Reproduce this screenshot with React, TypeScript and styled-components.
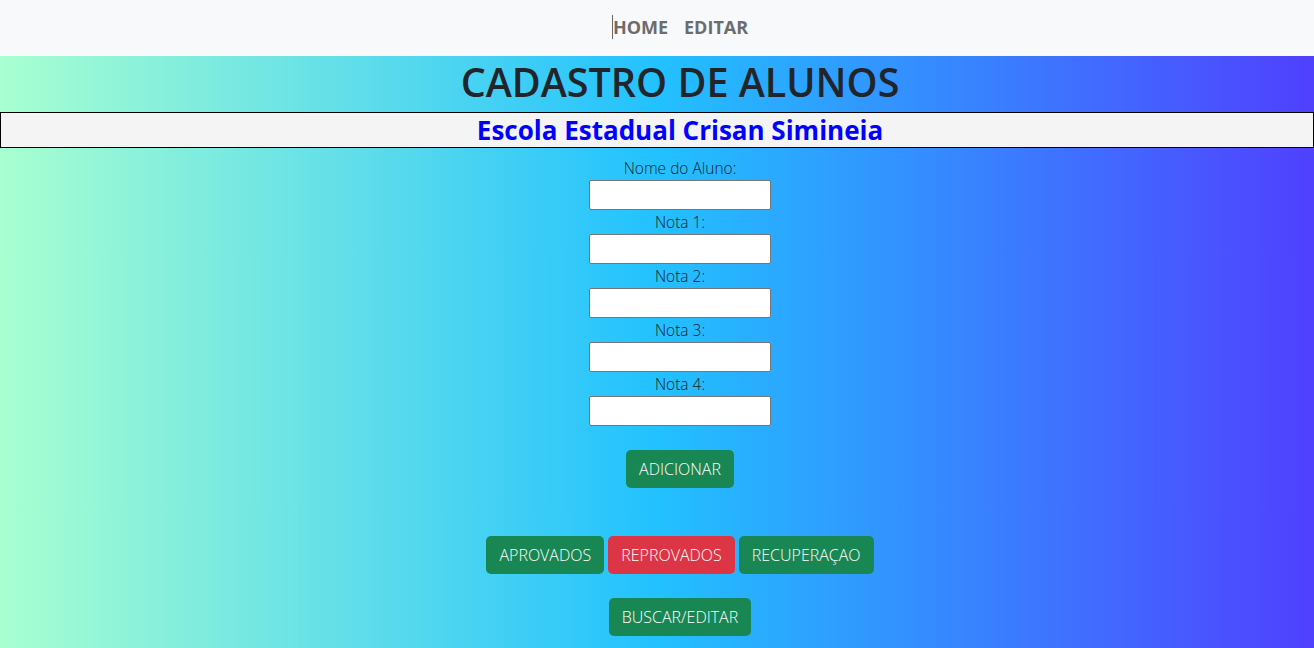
import React from "react";
import styled, { createGlobalStyle } from "styled-components";

const Global = createGlobalStyle`
  html, body { margin: 0; padding: 0; }
  body { font-family: "Open Sans", "Noto Sans", sans-serif; background: #fff; }
  * { box-sizing: border-box; }
`;

const Nav = styled.nav`
  height: 56px;
  background: #f8f9fa;
  display: flex;
  justify-content: center;
  align-items: center;
  gap: 16px;
  padding-left: 46px;
`;

const NavLink = styled.a<{ $caret?: boolean }>`
  font-family: "Open Sans", sans-serif;
  font-weight: 700;
  font-size: 18px;
  line-height: 24px;
  color: #6c6c6c;
  text-decoration: none;
  border-left: ${(p) => (p.$caret ? "1px solid #666" : "none")};
  margin-top: -2px;
`;

const Main = styled.main`
  background: linear-gradient(90deg, #a8ffd0 0%, #22c1ff 50%, #5040ff 100%);
  min-height: 592px;
  display: flex;
  flex-direction: column;
  align-items: center;
  padding-bottom: 12px;
`;

const Title = styled.h1`
  margin: 0;
  height: 56px;
  line-height: 52px;
  font-size: 39.5px;
  font-weight: 600;
  color: #212529;
  text-align: center;
  padding-left: 46px;
`;

const School = styled.h2`
  margin: 0;
  width: 100%;
  height: 36px;
  border: 1px solid #000;
  background: #f4f4f4;
  color: #0000ff;
  font-size: 26px;
  font-weight: 700;
  line-height: 34px;
  text-align: center;
  padding-left: 46px;
`;

const Form = styled.form`
  display: flex;
  flex-direction: column;
  align-items: center;
  padding-top: 8px;
  padding-left: 46px;
`;

const Label = styled.label`
  font-size: 15.5px;
  font-weight: 300;
  color: #1a1d20;
  line-height: 24px;
`;

const Input = styled.input`
  width: 182px;
  height: 30px;
  border: 1px solid #767676;
  border-radius: 2px;
  background: #fff;
  margin: 0;
`;

const Button = styled.button<{ $variant?: "success" | "danger" }>`
  height: 38px;
  padding: 0 13px;
  border: none;
  border-radius: 5px;
  background: ${(p) => (p.$variant === "danger" ? "#dc3545" : "#198754")};
  color: #fff;
  font-family: "Open Sans", sans-serif;
  font-weight: 300;
  font-size: 16px;
  cursor: pointer;
`;

const Row = styled.div<{ $mt: number; $shift?: boolean }>`
  display: flex;
  gap: 4px;
  justify-content: center;
  margin-top: ${(p) => p.$mt}px;
  padding-left: ${(p) => (p.$shift ? 46 : 0)}px;
`;

const fields = ["Nome do Aluno:", "Nota 1:", "Nota 2:", "Nota 3:", "Nota 4:"];

export default function App() {
  return (
    <>
      <Global />
      <Nav>
        <NavLink href="#" $caret>HOME</NavLink>
        <NavLink href="#">EDITAR</NavLink>
      </Nav>
      <Main>
        <Title>CADASTRO DE ALUNOS</Title>
        <School>Escola Estadual Crisan Simineia</School>
        <Form onSubmit={(e) => e.preventDefault()}>
          {fields.map((f) => (
            <React.Fragment key={f}>
              <Label>{f}</Label>
              <Input type="text" />
            </React.Fragment>
          ))}
          <Row $mt={24}>
            <Button type="submit">ADICIONAR</Button>
          </Row>
        </Form>
        <Row $mt={48} $shift>
          <Button>APROVADOS</Button>
          <Button $variant="danger">REPROVADOS</Button>
          <Button>RECUPERAÇAO</Button>
        </Row>
        <Row $mt={24} $shift>
          <Button>BUSCAR/EDITAR</Button>
        </Row>
      </Main>
    </>
  );
}
